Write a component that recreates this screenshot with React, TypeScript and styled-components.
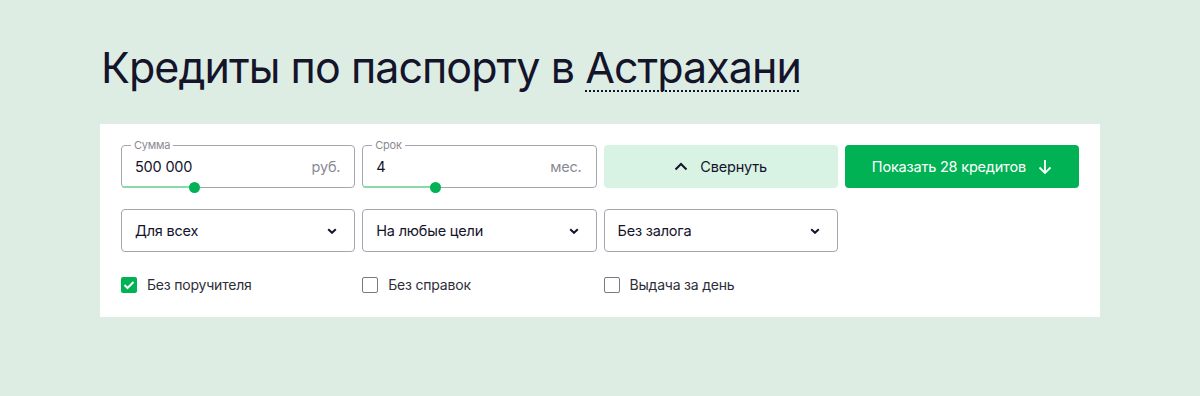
import React from "react";
import styled, { createGlobalStyle } from "styled-components";

const GlobalStyle = createGlobalStyle`
  body {
    margin: 0;
    background: #deede4;
    font-family: "Inter", "Noto Sans", sans-serif;
    color: #14142b;
  }
`;

const Page = styled.div`
  padding: 36px 100px 0 100px;
`;

const Title = styled.h1`
  margin: 0 0 26px 1px;
  font-size: 43px;
  line-height: 62px;
  font-weight: 400;
  letter-spacing: -0.95px;
  color: #14142b;
`;

const City = styled.span`
  text-decoration: underline dotted #14142b;
  text-decoration-thickness: 2px;
  text-underline-offset: 7px;
  text-decoration-skip-ink: none;
`;

const Card = styled.div`
  background: #fff;
  padding: 21px 21px 0 21px;
  height: 193px;
  box-sizing: border-box;
  display: grid;
  grid-template-columns: repeat(4, 1fr);
  grid-auto-rows: 43px;
  gap: 21px 7px;
  letter-spacing: -0.2px;
`;

const Field = styled.div`
  position: relative;
  border: 1px solid #a6a6ae;
  border-radius: 4px;
  display: flex;
  align-items: center;
  justify-content: space-between;
  padding: 0 14px 0 13px;
`;

const Legend = styled.span`
  position: absolute;
  top: -8px;
  left: 9px;
  padding: 0 3px;
  background: #fff;
  font-size: 11px;
  line-height: 14px;
  color: #8a8a94;
`;

const Value = styled.span`
  font-size: 14.5px;
  color: #14142b;
`;

const Unit = styled.span`
  font-size: 14.5px;
  color: #8a8a94;
`;

const Track = styled.div`
  position: absolute;
  left: 0;
  bottom: -1px;
  height: 2px;
  background: #86dba8;
  border-bottom-left-radius: 4px;
`;

const Knob = styled.div`
  position: absolute;
  bottom: -6px;
  width: 11px;
  height: 11px;
  margin-left: -5px;
  border-radius: 50%;
  background: #00b254;
`;

const Button = styled.button<{ $primary?: boolean }>`
  border: none;
  border-radius: 4px;
  font-family: inherit;
  font-size: 14.5px;
  letter-spacing: -0.2px;
  display: flex;
  align-items: center;
  justify-content: center;
  gap: 12px;
  cursor: pointer;
  background: ${(p) => (p.$primary ? "#00b254" : "#d8f3e4")};
  color: ${(p) => (p.$primary ? "#fff" : "#14142b")};
`;

const Select = styled.div`
  border: 1px solid #a6a6ae;
  border-radius: 4px;
  display: flex;
  align-items: center;
  justify-content: space-between;
  padding: 0 17px 0 13px;
  font-size: 14.5px;
  color: #14142b;
`;

const Check = styled.label`
  display: flex;
  align-items: center;
  gap: 10px;
  font-size: 14px;
  color: #2e2e3a;
  align-self: start;
  margin-top: 3px;
`;

const Box = styled.span<{ $on?: boolean }>`
  width: 16px;
  height: 16px;
  box-sizing: border-box;
  border-radius: 2px;
  border: ${(p) => (p.$on ? "none" : "1.5px solid #7a7a84")};
  background: ${(p) => (p.$on ? "#00b254" : "#fff")};
  display: flex;
  align-items: center;
  justify-content: center;
`;

const Chevron = () => (
  <svg width="10" height="6" viewBox="0 0 10 6">
    <path d="M1.2 1.2l3.8 3.6 3.8-3.6" fill="none" stroke="#14142b" strokeWidth="2" />
  </svg>
);

const sliders = [
  { label: "Сумма", value: "500 000", unit: "руб.", pos: 72 },
  { label: "Срок", value: "4", unit: "мес.", pos: 72 },
];

const selects = ["Для всех", "На любые цели", "Без залога"];

const checks = [
  { label: "Без поручителя", on: true },
  { label: "Без справок", on: false },
  { label: "Выдача за день", on: false },
];

export default function App() {
  return (
    <>
      <GlobalStyle />
      <Page>
        <Title>
          Кредиты по паспорту в <City>Астрахани</City>
        </Title>
        <Card>
          {sliders.map((s) => (
            <Field key={s.label}>
              <Legend>{s.label}</Legend>
              <Value>{s.value}</Value>
              <Unit>{s.unit}</Unit>
              <Track style={{ width: s.pos }} />
              <Knob style={{ left: s.pos }} />
            </Field>
          ))}
          <Button>
            <svg width="14" height="9" viewBox="0 0 14 9">
              <path d="M1.5 7.5l5.5-5.5 5.5 5.5" fill="none" stroke="#14142b" strokeWidth="2" />
            </svg>
            Свернуть
          </Button>
          <Button $primary>
            Показать 28 кредитов
            <svg width="14" height="16" viewBox="0 0 14 16">
              <path d="M7 1v13M1.5 8.5L7 14l5.5-5.5" fill="none" stroke="#fff" strokeWidth="1.8" />
            </svg>
          </Button>
          {selects.map((s) => (
            <Select key={s}>
              {s}
              <Chevron />
            </Select>
          ))}
          <div />
          {checks.map((c) => (
            <Check key={c.label}>
              <Box $on={c.on}>
                {c.on && (
                  <svg width="12" height="10" viewBox="0 0 12 10">
                    <path d="M1.5 5l3 3 6-6" fill="none" stroke="#fff" strokeWidth="2" />
                  </svg>
                )}
              </Box>
              {c.label}
            </Check>
          ))}
        </Card>
      </Page>
    </>
  );
}
